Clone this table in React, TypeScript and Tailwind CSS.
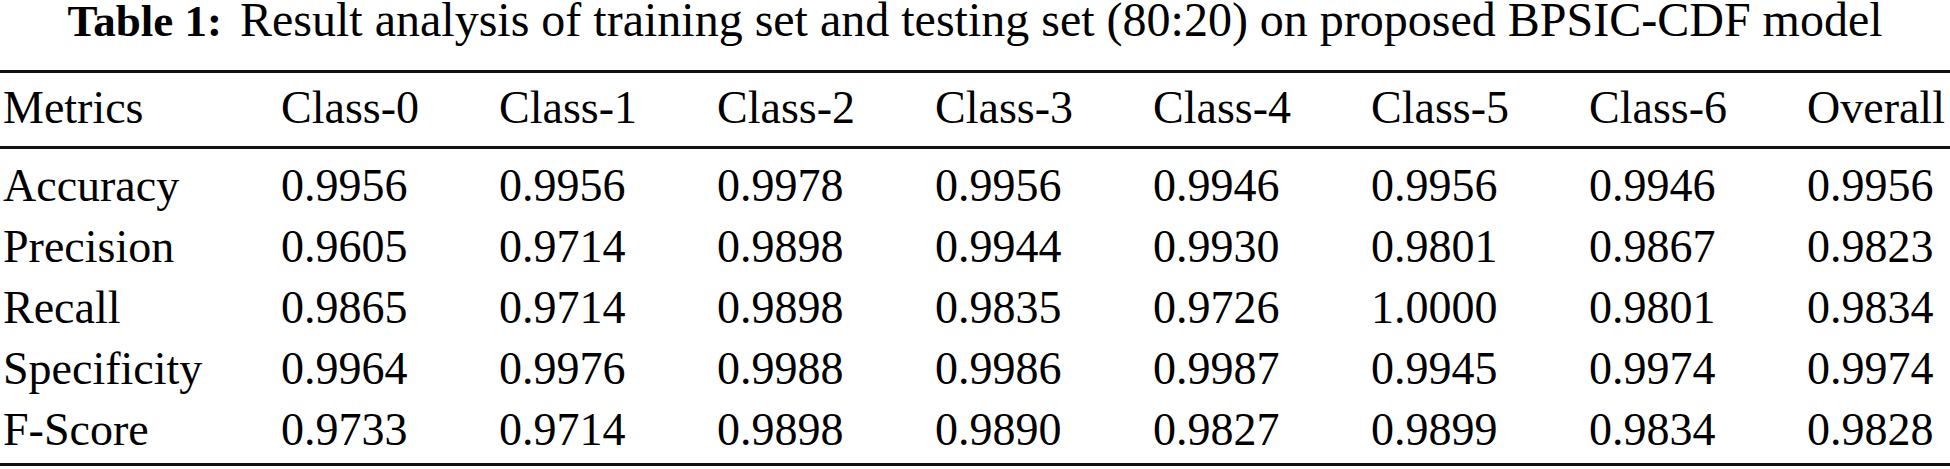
import React from "react";

const headers = ["Metrics", "Class-0", "Class-1", "Class-2", "Class-3", "Class-4", "Class-5", "Class-6", "Overall"];
const rows: string[][] = [
  ["Accuracy", "0.9956", "0.9956", "0.9978", "0.9956", "0.9946", "0.9956", "0.9946", "0.9956"],
  ["Precision", "0.9605", "0.9714", "0.9898", "0.9944", "0.9930", "0.9801", "0.9867", "0.9823"],
  ["Recall", "0.9865", "0.9714", "0.9898", "0.9835", "0.9726", "1.0000", "0.9801", "0.9834"],
  ["Specificity", "0.9964", "0.9976", "0.9988", "0.9986", "0.9987", "0.9945", "0.9974", "0.9974"],
  ["F-Score", "0.9733", "0.9714", "0.9898", "0.9890", "0.9827", "0.9899", "0.9834", "0.9828"],
];

const grid = "grid grid-cols-[281px_218px_218px_218px_218px_218px_218px_218px_1fr]";

export default function App() {
  return (
    <div className="w-[1950px] h-[469px] bg-white text-black overflow-hidden font-['Liberation_Serif','Times_New_Roman',serif]">
      <div className="h-[40px] leading-[40px] text-[48px] text-center whitespace-nowrap">
        <span className="font-bold text-[45px]">Table 1:</span>
        <span className="ml-[18px]">Result analysis of training set and testing set (80:20) on proposed BPSIC-CDF model</span>
      </div>
      <div className="mt-[30px] h-[3px] bg-[#111]" />
      <div className={`${grid} text-[46px] leading-[69px] pb-[4px]`}>
        {headers.map((h, i) => (
          <div key={i} className={i === 0 ? "pl-[3px]" : ""}>
            {h}
          </div>
        ))}
      </div>
      <div className="h-[3px] bg-[#111]" />
      <div className="pt-[6px] pb-[3px] text-[46px] leading-[61px]">
        {rows.map((r, ri) => (
          <div key={ri} className={grid}>
            {r.map((c, ci) => (
              <div key={ci} className={ci === 0 ? "pl-[3px]" : ""}>
                {c}
              </div>
            ))}
          </div>
        ))}
      </div>
      <div className="h-[3px] bg-[#111]" />
    </div>
  );
}
